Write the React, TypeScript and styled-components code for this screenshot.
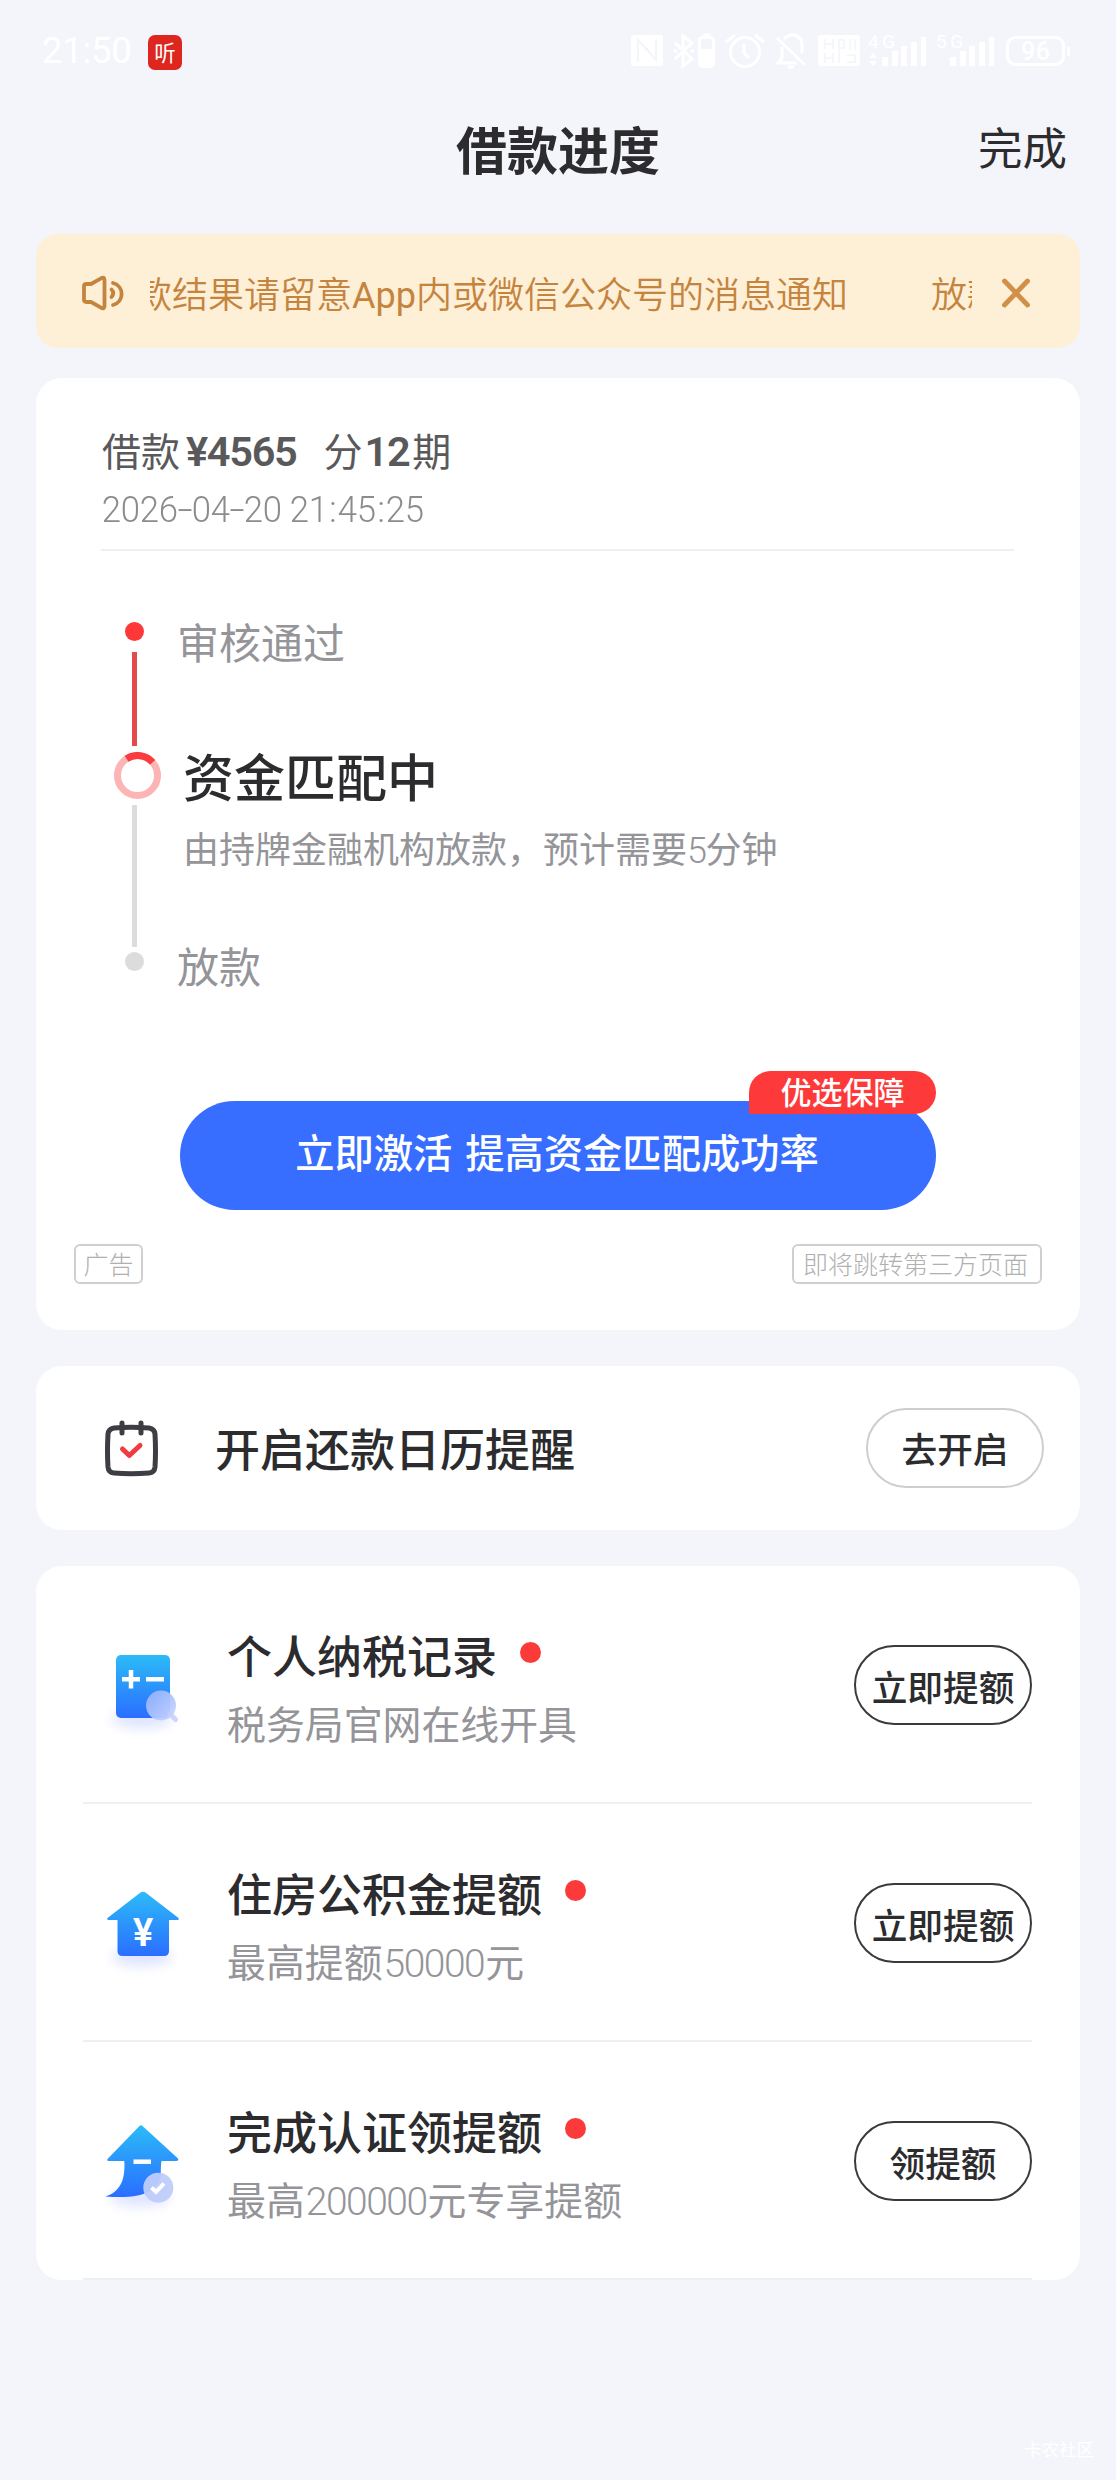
import React from 'react';
import styled, { createGlobalStyle } from 'styled-components';

const cjk = '"Noto Sans CJK SC", "Noto Sans", sans-serif';
const latin = 'Roboto, "Noto Sans CJK SC", sans-serif';
const ink = '#2c2c2f';
const muted = '#949499';
const red = '#fc3a3a';
const pageBg = '#f4f5fa';

const GlobalStyle = createGlobalStyle`
  * { box-sizing: border-box; }
  body { margin: 0; background: ${pageBg}; }
  svg { display: block; flex: none; }
`;

const Page = styled.main`
  width: 1116px;
  height: 2480px;
  display: flex;
  flex-direction: column;
  background: ${pageBg};
  color: ${ink};
  font-family: ${cjk};
  overflow: hidden;
  white-space: nowrap;
`;

const StatusBar = styled.div`
  height: 102px;
  padding: 0 45px 0 42px;
  display: flex;
  align-items: center;
  justify-content: space-between;
  color: #fff;
`;

const StatusLeft = styled.div`
  display: flex;
  align-items: center;
  gap: 17px;
`;

const Clock = styled.span`
  width: 89px;
  font: 400 36.5px/40px ${latin};
  letter-spacing: -0.3px;
`;

const ListenBadge = styled.span`
  width: 34px;
  height: 35px;
  border-radius: 7px;
  background: #dc261e;
  display: grid;
  place-items: center;
  margin-top: 2px;
  font: 400 21.5px/32px ${cjk};
`;

const Header = styled.header`
  height: 132px;
  padding: 0 49px 0 0;
  display: grid;
  grid-template-columns: 1fr auto 1fr;
`;

const Title = styled.h1`
  grid-column: 2;
  margin: 14px 0 0 49px;
  font-size: 51px;
  line-height: 64px;
  font-weight: 700;
`;

const Done = styled.span`
  justify-self: end;
  margin-top: 14px;
  font-size: 44.5px;
  line-height: 60px;
`;

const Notice = styled.section`
  margin: 0 36px;
  height: 114px;
  padding: 3px 49px 0 46px;
  border-radius: 22px;
  background: #feefd7;
  color: #c5843d;
  display: flex;
  align-items: center;
`;

const Marquee = styled.div`
  width: 822px;
  margin: -1px 30px 0 26px;
  overflow: hidden;
  display: flex;
  gap: 83px;
  font-size: 36px;
  line-height: 54px;
`;

const MarqueeText = styled.span<{ $scrolled?: number }>`
  flex: none;
  margin-left: ${(p) => -(p.$scrolled ?? 0)}px;
  font-weight: 350;
`;

const Card = styled.section<{ $top: number; $height: number }>`
  margin: ${(p) => p.$top}px 36px 0;
  height: ${(p) => p.$height}px;
  flex: none;
  border-radius: 26px;
  background: #fff;
`;

const Summary = styled.div`
  margin: 0 66px 0 65px;
  padding: 41px 0 8px 1px;
  height: 173px;
  border-bottom: 2px solid #efeff1;
`;

const Amount = styled.div`
  font-size: 39px;
  line-height: 60px;
  color: #59595b;
`;

const Num = styled.span<{ $size: number; $weight?: number; $track?: number; $gap?: string }>`
  font-family: ${latin};
  font-size: ${(p) => p.$size}px;
  font-weight: ${(p) => p.$weight ?? 300};
  letter-spacing: ${(p) => p.$track ?? 0}px;
  margin: ${(p) => p.$gap ?? '0'};
  line-height: 0;
`;

const DateLine = styled.div`
  display: flex;
  font: 300 36.5px/62px ${latin};
  color: #8c8c8e;
`;

const Glyph = styled.span<{ $width: number; $stretch: number }>`
  width: ${(p) => p.$width}px;
  display: flex;
  justify-content: center;
  white-space: pre;
  transform: scaleX(${(p) => p.$stretch});
`;

const Timeline = styled.div`
  height: 550px;
  padding-left: 74px;
  display: flex;
`;

const Rail = styled.div`
  width: 48px;
  padding-top: 71px;
  display: flex;
  flex-direction: column;
  align-items: center;
`;

const RailDot = styled.i<{ $color: string }>`
  width: 19px;
  height: 19px;
  border-radius: 50%;
  background: ${(p) => p.$color};
`;

const RailLine = styled.i<{ $color: string; $height: number; $gap: string }>`
  width: 5px;
  height: ${(p) => p.$height}px;
  margin: ${(p) => p.$gap};
  background: ${(p) => p.$color};
`;

const Spinner = styled.svg`
  margin-left: 6px;
`;

const Steps = styled.div`
  padding: 60px 0 0 19px;
  color: ${muted};
`;

const StepLabel = styled.div`
  font-size: 42px;
  line-height: 60px;
`;

const StepCurrent = styled.div`
  margin: 74px 0 63px 6px;
`;

const StepTitle = styled.div`
  font-size: 51px;
  line-height: 60px;
  font-weight: 500;
  color: ${ink};
`;

const StepDesc = styled.div`
  margin-top: 17px;
  font-size: 36px;
  line-height: 50px;
`;

const Activate = styled.div`
  position: relative;
  margin-left: 144px;
  width: 756px;
  height: 109px;
  padding-right: 2px;
  border-radius: 55px;
  background: #376eff;
  color: #fff;
  font-size: 39.3px;
  line-height: 99px;
  font-weight: 500;
  text-align: center;
  word-spacing: 4px;
`;

const Ribbon = styled.span`
  position: absolute;
  right: 0;
  top: -30px;
  width: 187px;
  height: 43px;
  border-radius: 22px 22px 22px 0;
  background: #fe3939;
  font-size: 31px;
  line-height: 40px;
`;

const AdRow = styled.div`
  margin: 34px 38px 0;
  display: flex;
  justify-content: space-between;
`;

const AdTag = styled.span<{ $pad: string }>`
  height: 40px;
  padding: ${(p) => p.$pad};
  border: 2px solid #cfcfcf;
  border-radius: 6px;
  color: #b0b0b0;
  font-size: 25px;
  line-height: 34px;
  font-weight: 300;
`;

const Reminder = styled.div`
  height: 100%;
  padding: 0 36px 0 68px;
  display: flex;
  align-items: center;
`;

const ReminderText = styled.span`
  margin-left: 56px;
  flex: 1;
  font-size: 45px;
  line-height: 60px;
  font-weight: 500;
`;

const Pill = styled.button<{ $border: string; $drop?: number }>`
  width: 178px;
  height: 80px;
  margin-top: ${(p) => (p.$drop ?? 0) * 2}px;
  padding: ${(p) => (p.$drop ?? 0) * 2}px 0 0;
  border: 2px solid ${(p) => p.$border};
  border-radius: 40px;
  background: transparent;
  color: ${ink};
  font: 500 35.7px/52px ${cjk};
`;

const Offer = styled.div`
  height: 238px;
  margin: 0 48px 0 47px;
  border-bottom: 2px solid #f0f0f3;
  display: flex;
  align-items: center;
`;

const OfferIcon = styled.svg`
  margin: 0 8px 0 4px;
`;

const OfferText = styled.div`
  flex: 1;
  margin-left: 20px;
  padding-top: 9px;
`;

const OfferTitle = styled.div`
  display: flex;
  gap: 23px;
  font-size: 45px;
  line-height: 66px;
  font-weight: 500;
`;

const UnreadDot = styled.i`
  width: 21px;
  height: 21px;
  margin-top: 20px;
  border-radius: 50%;
  background: ${red};
`;

const OfferDesc = styled.div`
  font-size: 38.9px;
  line-height: 68px;
  color: ${muted};
`;

const Watermark = styled.div`
  margin: auto 22px 18px auto;
  font-size: 17.5px;
  line-height: 26px;
  color: #fff;
`;

const StatusIcons = () => (
  <svg width="442" height="40" viewBox="629 29 442 40" fill="none" stroke="#fff" strokeWidth="3">
    <rect x="631" y="33" width="32" height="31" rx="2" fill="#fff" stroke="none" />
    <path d="M638 60V38L655 57M656 37V58L646 46" stroke={pageBg} strokeWidth="2" />
    <path d="M675 41L692 57L683 64V34L692 41L675 57M674 49H677M691 49H694" />
    <rect x="699.500" y="35.500" width="14" height="29" rx="3" />
    <path d="M703 33H710" />
    <rect x="700" y="47" width="13" height="17" fill="#fff" stroke="none" />
    <circle cx="745" cy="50" r="14.500" />
    <path d="M744 42V51L749 56M726 40L735 33M755 33L764 40" />
    <path d="M784 37Q789 32 794 33Q802 35 802 43V51M777 36L805 63M782 45V56L778 61H797" />
    <path d="M788 65H794" />
    <rect x="818" y="33" width="42" height="31" rx="3" fill="#fff" stroke="none" />
    <path d="M825 37V47M833 37V47M825 42H833M825 51V61M833 51V61M825 56H833M839 37V61M839 38H844V46H839M850 37V48M855 37V48M847 53H855V60H847" stroke={pageBg} strokeWidth="1.500" />
    <g fill="#fff" stroke="none" fontFamily="Roboto, sans-serif">
      <text x="868" y="46" fontSize="19" textLength="27">4G</text>
      <text x="936" y="46" fontSize="19" textLength="27">5G</text>
      <text x="1021" y="58" fontSize="25" fontWeight="500" textLength="29">96</text>
      {[0, 68].map((dx) => (
        <path key={dx} d={`M${882 + dx} 55h6v9h-6zM${892 + dx} 49h6v15h-6zM${901 + dx} 44h6v20h-6zM${911 + dx} 40h6v24h-6zM${921 + dx} 35h5v29h-5z`} />
      ))}
      <path d="M869 56l4-5l4 5zM869 59h8l-4 5z" />
    </g>
    <rect x="1007.500" y="35.500" width="56" height="27" rx="8" />
    <path d="M1068.500 45V54" />
  </svg>
);

const SpeakerIcon = () => (
  <svg width="42" height="38" viewBox="82 275 42 38" fill="none" stroke="#c5843d" strokeWidth="3.800" strokeLinecap="round" strokeLinejoin="round">
    <path d="M86.500 285H91L101 279.300Q104.500 277.500 104.500 281V307Q104.500 310.500 101 308.700L91 303H86.500Q84 303 84 300.500V287.500Q84 285 86.500 285Z" />
    <path d="M111.500 290.500Q115 294 111.500 298M113 284C124.500 287 124.500 303 113 306" />
  </svg>
);

const CloseIcon = () => (
  <svg width="28" height="30" viewBox="0 0 28 30" fill="none" stroke="#d0904a" strokeWidth="4.800" strokeLinecap="round">
    <path d="M2.500 3L25.500 27M25.500 3L2.500 27" />
  </svg>
);

const CalendarIcon = () => (
  <svg width="55" height="58" viewBox="104 1420 55 58" fill="none" strokeWidth="5" strokeLinecap="round" strokeLinejoin="round">
    <path d="M114 1429Q131 1427.500 149 1429Q154.500 1430 155 1435Q156 1452 155 1468Q154.500 1473.500 149 1474Q131 1475.500 114 1474Q108.500 1473.500 108 1468Q107 1452 108 1435Q108.500 1430 114 1429Z" stroke="#3e3d43" />
    <path d="M122 1424V1434M141 1424V1434" stroke="#3e3d43" />
    <path d="M122.500 1450L129.300 1456.500L140 1446.500" stroke="#ef3b42" />
  </svg>
);

const BlueGradient = ({ id }: { id: string }) => (
  <defs>
    <linearGradient id={id} x1="0" y1="0" x2="0" y2="1">
      <stop offset="0" stopColor="#2cbbf8" />
      <stop offset="1" stopColor="#2a6eff" />
    </linearGradient>
    <linearGradient id={`${id}-glass`} x1="0" y1="0" x2="1" y2="1">
      <stop offset="0" stopColor="#8eaefc" />
      <stop offset="1" stopColor="#cdd8ff" />
    </linearGradient>
    <filter id={`${id}-blur`} x="-40%" y="-80%" width="180%" height="260%">
      <feGaussianBlur stdDeviation="6" />
    </filter>
  </defs>
);

const TaxIcon = () => (
  <OfferIcon width="112" height="112" viewBox="87 1628 112 112">
    <BlueGradient id="tax" />
    <ellipse cx="142" cy="1719" rx="30" ry="9" fill="#dde3ff" filter="url(#tax-blur)" />
    <rect x="116" y="1655" width="54" height="63" rx="5" fill="url(#tax)" />
    <path d="M122 1679.300H140M131 1670V1688.500M146 1679.300H164" stroke="#fff" strokeWidth="4.500" />
    <path d="M170 1714L175.500 1719.500" stroke="#cbd6fd" strokeWidth="5" strokeLinecap="round" />
    <circle cx="161" cy="1705.500" r="15" fill="url(#tax-glass)" opacity="0.94" />
  </OfferIcon>
);

const HouseIcon = () => (
  <OfferIcon width="112" height="112" viewBox="87 1866 112 112">
    <BlueGradient id="house" />
    <ellipse cx="142" cy="1957" rx="30" ry="9" fill="#dde3ff" filter="url(#house-blur)" />
    <path d="M140.500 1892.500Q143 1891 145.500 1892.500L178.500 1918Q179.500 1920 177 1920H169V1951Q169 1956 164 1956H122.500Q117.500 1956 117.500 1951V1920H109Q106.500 1920 107.500 1918Z" fill="url(#house)" />
    <text x="143.200" y="1945.500" fontSize="38" fontWeight="600" fontFamily="Roboto, sans-serif" fill="#fff" textAnchor="middle">¥</text>
  </OfferIcon>
);

const CertifyIcon = () => (
  <OfferIcon width="112" height="112" viewBox="87 2104 112 112">
    <BlueGradient id="cert" />
    <ellipse cx="140" cy="2198" rx="30" ry="8" fill="#dde3ff" filter="url(#cert-blur)" />
    <path d="M139.500 2126Q141 2124.500 142.500 2126L178 2158.500Q179 2161 176 2161H161.500C159.500 2174 164 2180 152 2190C142 2197 124 2198 105.500 2196.500C120 2192 125.500 2180 124.300 2161H109Q106 2161 108 2158.500Z" fill="url(#cert)" />
    <path d="M133.500 2161.700H151" stroke="#fff" strokeWidth="4.500" />
    <circle cx="158.300" cy="2187.700" r="15" fill="#bfccfb" opacity="0.95" />
    <path d="M151.500 2187.500L156 2192L164 2183.500" stroke="#fff" strokeWidth="4" fill="none" />
  </OfferIcon>
);

const glyphBox: Record<string, [number, number]> = {
  '-': [14.2, 1.5],
  ':': [10.3, 1],
  ' ': [8.5, 1],
};

const Timestamp = ({ value }: { value: string }) => (
  <DateLine>
    {[...value].map((ch, i) => {
      const [width, stretch] = glyphBox[ch] ?? [18.9, 0.95];
      return <Glyph key={i} $width={width} $stretch={stretch}>{ch}</Glyph>;
    })}
  </DateLine>
);

const offers = [
  { icon: <TaxIcon />, title: '个人纳税记录', desc: '税务局官网在线开具', action: '立即提额' },
  { icon: <HouseIcon />, title: '住房公积金提额', desc: <>最高提额<Num $size={39} $track={-1.5} $gap="0 1px">50000</Num>元</>, action: '立即提额' },
  { icon: <CertifyIcon />, title: '完成认证领提额', desc: <>最高<Num $size={39} $track={-1.5} $gap="0 1px">200000</Num>元专享提额</>, action: '领提额' },
];

export default function App() {
  return (
    <Page>
      <GlobalStyle />
      <StatusBar>
        <StatusLeft>
          <Clock>21:50</Clock>
          <ListenBadge>听</ListenBadge>
        </StatusLeft>
        <StatusIcons />
      </StatusBar>
      <Header>
        <Title>借款进度</Title>
        <Done>完成</Done>
      </Header>
      <Notice>
        <SpeakerIcon />
        <Marquee>
          <MarqueeText $scrolled={14}>款结果请留意<Num $size={36} $weight={400}>App</Num>内或微信公众号的消息通知</MarqueeText>
          <MarqueeText>放款</MarqueeText>
        </Marquee>
        <CloseIcon />
      </Notice>

      <Card $top={30} $height={952}>
        <Summary>
          <Amount>
            借款<Num $size={41.5} $weight={600} $track={-1.3} $gap="0 27px 0 6px">¥4565</Num>
            分<Num $size={41.5} $weight={600} $track={-1.3} $gap="0 3px 0 2px">12</Num>期
          </Amount>
          <Timestamp value="2026-04-20 21:45:25" />
        </Summary>
        <Timeline>
          <Rail>
            <RailDot $color="#fe3838" />
            <RailLine $color="#e54a4b" $height={94} $gap="11px 0 6px" />
            <Spinner width="47" height="47" viewBox="0 0 47 47" fill="none" strokeWidth="7">
              <circle cx="23.500" cy="23.500" r="20" stroke="#fdb4b4" />
              <path d="M12.600 6.700A20 20 0 0 1 38.600 10.400" stroke="#f93c3e" />
            </Spinner>
            <RailLine $color="#dcdcdc" $height={142} $gap="6px 0 5px" />
            <RailDot $color="#dcdcdc" />
          </Rail>
          <Steps>
            <StepLabel>审核通过</StepLabel>
            <StepCurrent>
              <StepTitle>资金匹配中</StepTitle>
              <StepDesc>由持牌金融机构放款，预计需要<Num $size={36} $track={-1.5}>5</Num>分钟</StepDesc>
            </StepCurrent>
            <StepLabel>放款</StepLabel>
          </Steps>
        </Timeline>
        <Activate>
          立即激活 提高资金匹配成功率
          <Ribbon>优选保障</Ribbon>
        </Activate>
        <AdRow>
          <AdTag $pad="0 7.500px">广告</AdTag>
          <AdTag $pad="0 12px 0 9px">即将跳转第三方页面</AdTag>
        </AdRow>
      </Card>

      <Card $top={36} $height={164}>
        <Reminder>
          <CalendarIcon />
          <ReminderText>开启还款日历提醒</ReminderText>
          <Pill $border="#cecece">去开启</Pill>
        </Reminder>
      </Card>

      <Card $top={36} $height={714}>
        {offers.map((o) => (
          <Offer key={o.title}>
            {o.icon}
            <OfferText>
              <OfferTitle>{o.title}<UnreadDot /></OfferTitle>
              <OfferDesc>{o.desc}</OfferDesc>
            </OfferText>
            <Pill $border="#3a3a3c" $drop={1}>{o.action}</Pill>
          </Offer>
        ))}
      </Card>
      <Watermark>卡农社区</Watermark>
    </Page>
  );
}
